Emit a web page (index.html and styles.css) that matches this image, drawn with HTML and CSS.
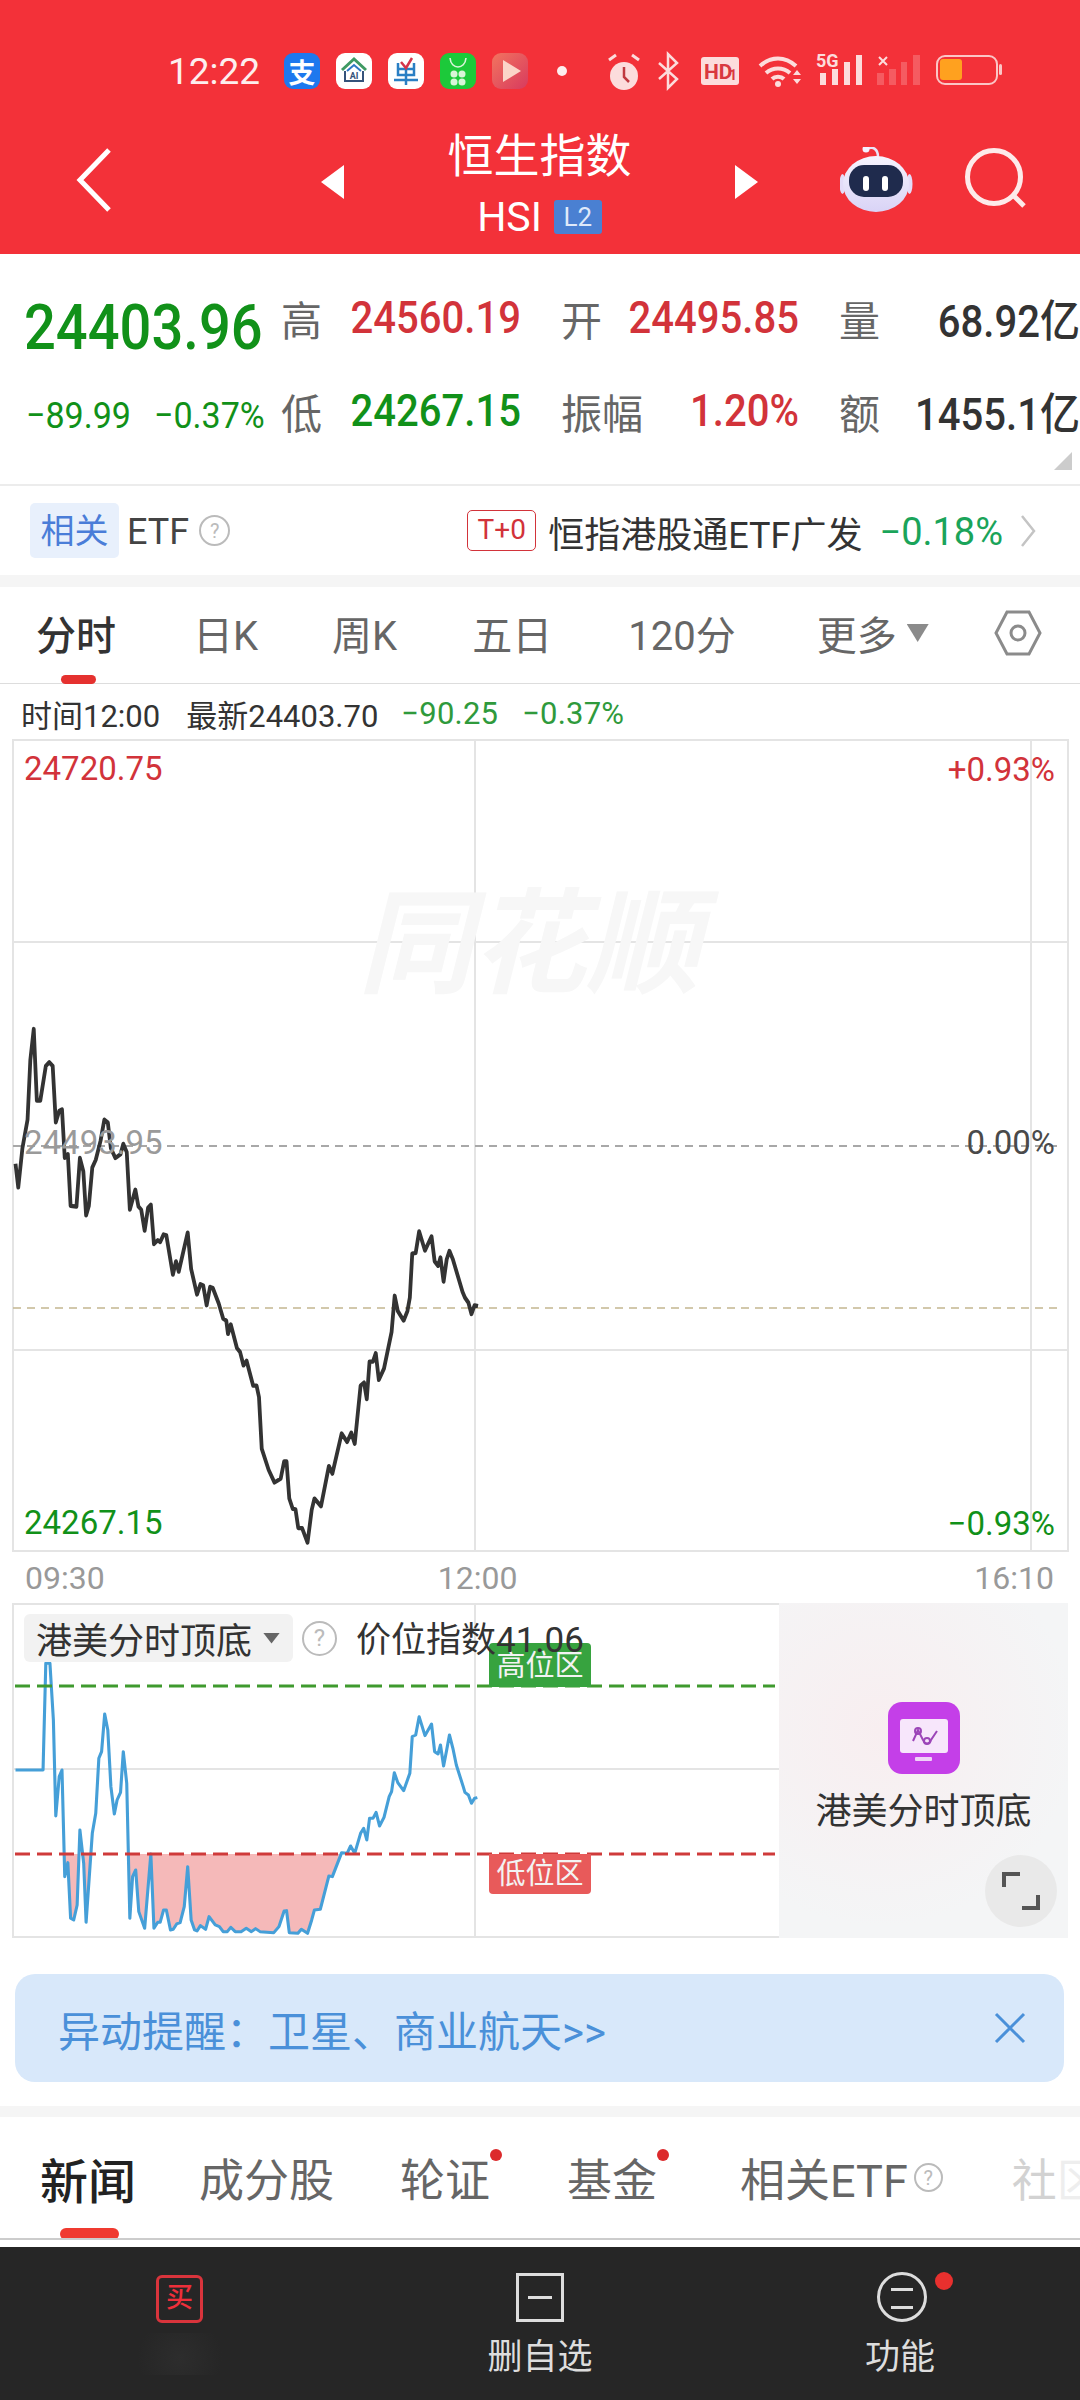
FILE: index.html
```html
<!DOCTYPE html>
<html lang="zh-CN">
<head>
<meta charset="UTF-8">
<meta name="viewport" content="width=device-width, initial-scale=1.0">
<title>恒生指数</title>
<link rel="stylesheet" href="styles.css">
</head>
<body>
<svg width="0" height="0" class="defs">
  <defs>
    <polyline id="price-line" points="45,480 53,542 65,440 80,365 88,210 98,128 107,315 117,315 133,225 143,215 153,225 162,372 172,342 180,338 188,465 197,455 205,590 222,592 232,465 242,500 250,615 258,590 268,490 278,470 292,420 303,365 313,372 322,440 335,465 350,455 358,428 368,450 377,600 393,548 402,592 410,600 420,655 430,595 438,587 447,690 458,680 465,685 475,665 483,667 502,770 511,735 519,762 545,660 555,755 572,822 582,795 590,798 600,850 610,802 618,805 635,845 648,885 657,890 662,925 670,900 688,962 697,972 707,1007 716,995 735,1060 745,1060 752,1090 760,1225 780,1280 797,1313 815,1303 825,1258 832,1258 840,1355 850,1382 858,1383 866,1432 877,1432 893,1470 905,1385 913,1355 932,1375 955,1270 965,1290 992,1185 1008,1207 1020,1183 1030,1212 1047,1060 1057,1052 1065,1095 1073,997 1083,997 1091,975 1100,1045 1115,1015 1137,920 1146,825 1155,865 1172,890 1183,865 1190,830 1197,715 1207,713 1217,657 1234,707 1253,670 1262,735 1272,747 1279,725 1288,788 1297,730 1305,708 1315,730 1343,815 1350,830 1360,843 1369,873 1378,850 1388,852"/>
    <clipPath id="below-low"><rect x="0" y="822" width="1600" height="260"/></clipPath>
    <linearGradient id="robot-head" x1="0" y1="0" x2="0" y2="1">
      <stop offset="0" stop-color="#f6f4fe"/>
      <stop offset="1" stop-color="#d9d3f6"/>
    </linearGradient>
  </defs>
</svg>

<header class="top">
  <div class="status">
    <span class="clock">12:22</span>
    <span class="app app-pay">支</span>
    <svg class="app app-white" viewBox="0 0 36 36">
      <path d="M6 17 18 6l12 11" fill="none" stroke="#3f9a63" stroke-width="3"/>
      <path d="M11 18 18 12l7 6" fill="none" stroke="#2f78c4" stroke-width="2"/>
      <path d="M9 18v10h18V18" fill="none" stroke="#35527a" stroke-width="2"/>
      <text x="18" y="26" class="app-ai">AI</text>
    </svg>
    <svg class="app app-white" viewBox="0 0 36 36">
      <path d="M10 10v12h16V10M18 16v16M6 27h24M10 16h16" fill="none" stroke="#2a7fc4" stroke-width="2.5"/>
      <path d="M13 9l5 6 6-10" fill="none" stroke="#d5344a" stroke-width="2.5"/>
    </svg>
    <svg class="app app-green" viewBox="0 0 36 36">
      <path d="M10 5c1 12 15 12 16 0" fill="none" stroke="#d8f5d8" stroke-width="1.6"/>
      <circle cx="14" cy="21" r="3.5" fill="#d8f5d8"/>
      <circle cx="22" cy="21" r="3.5" fill="#d8f5d8"/>
      <circle cx="14" cy="29" r="3.5" fill="#d8f5d8"/>
      <circle cx="22" cy="29" r="3.5" fill="#d8f5d8"/>
    </svg>
    <svg class="app app-play" viewBox="0 0 36 36">
      <path d="M11 7 29 18 11 29z" fill="#fbd5c8"/>
    </svg>
    <span class="status-dot"></span>
    <svg class="sys" viewBox="600 45 410 55">
      <circle cx="625" cy="77" r="14" fill="#fcdcdc"/>
      <path d="M625 68v10l5 5" fill="none" stroke="#c03a40" stroke-width="2.5"/>
      <path d="M610 61l7-5M640 61l-7-5" stroke="#fcdcdc" stroke-width="3"/>
      <path d="M660 64 678 80 669 89V55L678 64 660 80" fill="none" stroke="#fcdcdc" stroke-width="2.5"/>
      <rect x="702" y="58" width="38" height="28" rx="3" fill="#fcdcdc"/>
      <text x="705" y="80" class="sys-hd">HD</text>
      <text x="730" y="81" class="sys-one">1</text>
      <path d="M761 67c11-10 25-10 36 0M767 74c7-6 17-6 24 0M773 80c3-3 9-3 12 0" fill="none" stroke="#fcdcdc" stroke-width="4"/>
      <circle cx="779" cy="85" r="3" fill="#fcdcdc"/>
      <path d="M794 76l4-5 4 5zM794 80l4 5 4-5z" fill="#fcdcdc"/>
      <text x="817" y="68" class="sys-5g">5G</text>
      <path d="M821 74h6v12h-6zM833 70h6v16h-6zM845 63h6v23h-6zM857 56h6v30h-6z" fill="#fcdcdc"/>
      <path d="M880 58l8 8M888 58l-8 8" stroke="#fcdcdc" stroke-width="2"/>
      <path d="M878 74h7v12h-7zM890 70h7v16h-7zM902 63h6v23h-6zM914 56h7v30h-7z" fill="#fcdcdc" opacity=".25"/>
      <rect x="938" y="57" width="60" height="28" rx="8" fill="none" stroke="#fbc6c6" stroke-width="2"/>
      <rect x="941" y="60" width="22" height="21" rx="3" fill="#ffa11f"/>
      <rect x="1000" y="65" width="3" height="11" rx="1.5" fill="#fbc6c6"/>
    </svg>
  </div>
  <nav class="nav">
    <svg class="back" viewBox="0 0 36 64"><path d="M33 2 4 32l29 30" fill="none" stroke="#fff" stroke-width="5"/></svg>
    <span class="tri tri-left"></span>
    <div class="nav-title">
      <div class="name">恒生指数</div>
      <div class="code"><span>HSI</span><span class="l2">L2</span></div>
    </div>
    <span class="tri tri-right"></span>
    <svg class="robot" viewBox="840 148 74 66">
      <path d="M867 150c6-3 11 0 11 8" fill="none" stroke="#e8e4f8" stroke-width="2.5"/>
      <circle cx="866" cy="150" r="3.5" fill="#f5f0ff"/>
      <ellipse cx="842.5" cy="185" rx="3" ry="10" fill="#e3dcf8"/>
      <ellipse cx="909.5" cy="185" rx="3" ry="10" fill="#e3dcf8"/>
      <ellipse cx="876" cy="185" rx="33" ry="28" fill="url(#robot-head)"/>
      <rect x="849" y="166" width="54" height="32" rx="15" fill="#1f2b4d"/>
      <rect x="863" y="177" width="6" height="15" rx="3" fill="#fff"/>
      <rect x="882" y="177" width="6" height="15" rx="3" fill="#fff"/>
    </svg>
    <svg class="search" viewBox="964 150 62 62">
      <circle cx="994" cy="180" r="26.5" fill="none" stroke="#fdeaea" stroke-width="5"/>
      <path d="M1014 199l10 10" stroke="#fdeaea" stroke-width="5"/>
    </svg>
  </nav>
</header>

<section class="quote">
  <div class="price">24403.96</div>
  <div class="lbl">高</div>
  <div class="val up">24560.19</div>
  <div></div>
  <div class="lbl">开</div>
  <div class="val up">24495.85</div>
  <div></div>
  <div class="lbl">量</div>
  <div class="val dark">68.92亿</div>

  <div class="change"><span>−89.99</span><span>−0.37%</span></div>
  <div class="lbl">低</div>
  <div class="val down">24267.15</div>
  <div></div>
  <div class="lbl">振幅</div>
  <div class="val up">1.20%</div>
  <div></div>
  <div class="lbl">额</div>
  <div class="val dark">1455.1亿</div>
  <span class="corner"></span>
</section>

<section class="etf">
  <span class="etf-tag">相关</span>
  <span class="etf-name">ETF</span>
  <span class="help">?</span>
  <span class="t0">T+0</span>
  <span class="etf-fund">恒指港股通ETF广发</span>
  <span class="etf-pct">−0.18%</span>
  <svg class="etf-more" viewBox="0 0 16 32"><path d="M2 1l12 15L2 31" fill="none" stroke="#c4c4c4" stroke-width="2.5"/></svg>
</section>

<div class="band"></div>

<section class="tabs">
  <span class="tab active">分时</span>
  <span class="tab">日K</span>
  <span class="tab">周K</span>
  <span class="tab">五日</span>
  <span class="tab">120分</span>
  <span class="tab">更多</span>
  <span class="tab-caret"></span>
  <svg class="hex" viewBox="0 0 48 46">
    <path d="M13 2h22l11 21-11 21H13L2 23z" fill="none" stroke="#8b8b8b" stroke-width="3"/>
    <circle cx="24" cy="23" r="7" fill="none" stroke="#8b8b8b" stroke-width="3"/>
  </svg>
</section>

<div class="info">
  <span class="info-dark">时间12:00</span>
  <span class="info-dark info-new">最新24403.70</span>
  <span class="info-green">−90.25</span>
  <span class="info-green">−0.37%</span>
</div>

<section class="chart">
  <svg class="chart-svg" viewBox="0 739 1080 813">
    <path d="M13 740H1068M13 942H1068M13 1350H1068M13 1551H1068M13 739V1552M1068 739V1552M475 739V1552M1031 739V1552" fill="none" stroke="#e4e4e4" stroke-width="2"/>
    <path d="M13 1146H1063" stroke="#a8a8a8" stroke-width="2" stroke-dasharray="8 6"/>
    <path d="M13 1308H1063" stroke="#c4b690" stroke-width="1.5" stroke-dasharray="8 6"/>
    <g transform="translate(0 980) scale(.3444 .3827)">
      <use href="#price-line" class="price-path"/>
    </g>
  </svg>
  <div class="mark">同花顺</div>
  <span class="tag tag-l1 up">24720.75</span>
  <span class="tag tag-l2 grey">24493.95</span>
  <span class="tag tag-l3 down">24267.15</span>
  <span class="tag tag-r1 up">+0.93%</span>
  <span class="tag tag-r2 mid">0.00%</span>
  <span class="tag tag-r3 down">−0.93%</span>
</section>

<div class="axis"><span>09:30</span><span class="axis-mid">12:00</span><span class="axis-end">16:10</span></div>

<section class="sub">
  <div class="plot">
    <svg class="plot-svg" viewBox="0 1603 779 335">
      <path d="M13 1604H779M13 1769H779M13 1937H779M13 1603V1938M475 1603V1938" fill="none" stroke="#e4e4e4" stroke-width="2"/>
      <g transform="translate(0 1580) scale(.3444 .3333)">
        <g clip-path="url(#below-low)">
          <polygon class="low-fill" points="45,570 125,570 133,250 145,250 155,420 162,708 172,590 180,570 188,890 197,848 205,1015 214,1020 224,975 232,750 243,850 250,1027 268,760 278,700 287,535 295,515 304,402 313,450 322,620 332,702 340,660 350,637 358,515 368,610 377,1015 385,890 394,870 403,995 420,1045 438,822 447,1045 458,1027 465,1027 475,990 483,990 495,1050 503,1048 513,1032 523,1028 535,980 545,860 555,1020 565,1050 572,1053 582,1037 597,1048 607,1010 625,1035 637,1040 648,1055 660,1055 670,1042 683,1055 700,1055 715,1045 730,1055 742,1046 755,1055 795,1058 810,1040 825,993 832,992 840,1058 865,1060 875,1048 893,1060 905,1020 913,990 930,988 955,888 965,890 992,818 1008,820 1386,653 1386,822 45,822"/>
        </g>
        <polyline class="index-path" points="45,570 125,570 133,250 145,250 155,420 162,708 172,590 180,570 188,890 197,848 205,1015 214,1020 224,975 232,750 243,850 250,1027 268,760 278,700 287,535 295,515 304,402 313,450 322,620 332,702 340,660 350,637 358,515 368,610 377,1015 385,890 394,870 403,995 420,1045 438,822 447,1045 458,1027 465,1027 475,990 483,990 495,1050 503,1048 513,1032 523,1028 535,980 545,860 555,1020 565,1050 572,1053 582,1037 597,1048 607,1010 625,1035 637,1040 648,1055 660,1055 670,1042 683,1055 700,1055 715,1045 730,1055 742,1046 755,1055 795,1058 810,1040 825,993 832,992 840,1058 865,1060 875,1048 893,1060 905,1020 913,990 930,988 955,888 965,890 992,818 1008,820 1018,798 1030,820 1047,760 1056,745 1065,780 1073,715 1083,715 1092,697 1102,738 1115,712 1130,650 1137,635 1145,578 1155,608 1172,632 1190,580 1197,470 1207,465 1217,410 1234,467 1253,432 1262,515 1272,522 1279,495 1288,558 1297,510 1305,465 1315,505 1325,555 1345,620 1350,637 1360,645 1369,670 1378,655 1386,653"/>
      </g>
      <path d="M15 1686H775" stroke="#3f9a2e" stroke-width="3" stroke-dasharray="15 7"/>
      <path d="M15 1854H775" stroke="#cf3a3a" stroke-width="3" stroke-dasharray="15 7"/>
    </svg>
    <span class="zone zone-high">高位区</span>
    <span class="zone zone-low">低位区</span>
    <div class="plot-head">
      <span class="pill">港美分时顶底<i class="pill-caret"></i></span>
      <span class="help help-big">?</span>
      <span class="plot-val">价位指数41.06</span>
    </div>
  </div>
  <div class="side">
    <svg class="side-icon" viewBox="0 0 72 72">
      <rect width="72" height="72" rx="14" fill="#c43fe8"/>
      <rect x="12" y="17" width="48" height="34" rx="3" fill="#f7e6fb"/>
      <rect x="27" y="55" width="17" height="4" rx="1" fill="#f0d2f8"/>
      <path d="M25 39l5-11 5 10c2 5 7 4 8 0l6-9" fill="none" stroke="#9c45b8" stroke-width="2"/>
      <circle cx="30" cy="29" r="3" fill="none" stroke="#9c45b8" stroke-width="2"/>
      <circle cx="39" cy="39" r="3" fill="none" stroke="#9c45b8" stroke-width="2"/>
    </svg>
    <div class="side-name">港美分时顶底</div>
    <span class="expand">
      <svg viewBox="0 0 38 38"><path d="M2 15V2h16M36 23v13H20" fill="none" stroke="#555" stroke-width="4"/></svg>
    </span>
  </div>
</section>

<div class="notice-wrap">
  <div class="notice">
    <span>异动提醒：卫星、商业航天&gt;&gt;</span>
    <svg class="notice-x" viewBox="0 0 32 32"><path d="M2 2l28 28M30 2 2 30" stroke="#4a90d9" stroke-width="3"/></svg>
  </div>
</div>

<div class="band band-low"></div>

<section class="news">
  <span class="news-tab active">新闻</span>
  <span class="news-tab">成分股</span>
  <span class="news-tab has-dot">轮证</span>
  <span class="news-tab has-dot">基金</span>
  <span class="news-tab">相关ETF<span class="help help-small">?</span></span>
  <span class="news-tab faded">社<span class="fainter">区</span></span>
</section>

<footer class="bottom">
  <div class="bottom-item">
    <span class="buy">买</span>
    <span class="smudge"></span>
  </div>
  <div class="bottom-item">
    <span class="del"></span>
    <span class="bottom-text">删自选</span>
  </div>
  <div class="bottom-item">
    <span class="more"></span>
    <span class="bottom-text">功能</span>
  </div>
</footer>
</body>
</html>
```

FILE: styles.css
```css
* {
  box-sizing: border-box;
}

body {
  margin: 0;
  width: 1080px;
  height: 2400px;
  overflow: hidden;
  background-color: #fff;
  font-family: Roboto, "Noto Sans CJK SC", sans-serif;
  color: #333;
}

.defs {
  position: absolute;
}

.up { color: #d2333a; }
.down { color: #119119; }
.dark { color: #333; }
.grey { color: #9a9a9a; }
.mid { color: #4a4a4a; }

/* red header */
.top {
  height: 254px;
  background-color: #f33139;
  padding-top: 53px;
}

.status {
  display: flex;
  align-items: center;
  height: 36px;
  padding-left: 168px;
}

.clock {
  width: 92px;
  margin-right: 24px;
  font-size: 37px;
  color: #fdeeee;
}

.app {
  width: 36px;
  height: 36px;
  margin-right: 16px;
  border-radius: 9px;
}

.app-pay {
  display: flex;
  justify-content: center;
  align-items: center;
  background-color: #1e78ee;
  color: #fff;
  font-size: 27px;
  font-weight: 700;
}

.app-white { background-color: #fff; }
.app-green { background-color: #1cc93a; }
.app-play { background: linear-gradient(135deg, #f2745f, #d83a5e); }

.app-ai {
  font-size: 9px;
  font-weight: 700;
  fill: #35527a;
  text-anchor: middle;
}

.status-dot {
  width: 10px;
  height: 10px;
  margin-left: 13px;
  border-radius: 50%;
  background-color: #fdeeee;
}

.sys {
  width: 410px;
  height: 55px;
  margin-left: 32px;
  flex-shrink: 0;
}

.sys-hd {
  font-size: 21px;
  font-weight: 700;
  fill: #d9383f;
}

.sys-one {
  font-size: 14px;
  font-weight: 700;
  fill: #d9383f;
}

.sys-5g {
  font-size: 18px;
  font-weight: 700;
  fill: #fcdcdc;
}

.nav {
  display: flex;
  align-items: flex-start;
  margin-top: 38px;
}

.back {
  width: 36px;
  height: 64px;
  margin: 21px 0 0 76px;
}

.tri {
  width: 0;
  height: 0;
  margin-top: 38px;
  border-top: 17px solid transparent;
  border-bottom: 17px solid transparent;
}

.tri-left {
  margin-left: 209px;
  border-right: 23px solid #fff;
}

.tri-right {
  border-left: 23px solid #fff;
}

.nav-title {
  width: 391px;
  text-align: center;
  color: #fff;
}

.name {
  height: 60px;
  font-size: 46px;
  line-height: 58px;
}

.code {
  display: flex;
  justify-content: center;
  align-items: center;
  gap: 12px;
  margin-top: 12px;
  font-size: 41px;
  line-height: 36px;
}

.l2 {
  width: 48px;
  height: 34px;
  background-color: #4a80d2;
  border-radius: 3px;
  font-size: 26px;
  line-height: 34px;
  color: #dfe9fa;
}

.robot {
  width: 74px;
  height: 66px;
  margin: 20px 0 0 82px;
}

.search {
  width: 62px;
  height: 62px;
  margin: 20px 0 0 50px;
}

/* quote block */
.quote {
  position: relative;
  display: grid;
  grid-template-columns: 255px 72px 168px 40px 71px 167px 40px 76px 165px;
  grid-template-rows: 93px 93px;
  height: 232px;
  width: 1080px;
  padding: 17px 0 0 26px;
  align-items: center;
  border-bottom: 2px solid #ececec;
}

.price {
  margin-left: -2px;
  padding-top: 20px;
  font-size: 63px;
  font-weight: 500;
  white-space: nowrap;
  transform: scaleX(.89);
  transform-origin: left;
  color: #119119;
}

.lbl {
  font-size: 41px;
  color: #666;
  white-space: nowrap;
}

.val {
  display: flex;
  justify-content: flex-end;
  font-size: 44px;
  font-weight: 500;
  white-space: nowrap;
  transform: scaleX(.91);
  transform-origin: right;
}

.change {
  display: flex;
  padding-top: 10px;
  font-size: 37px;
  color: #119119;
  white-space: nowrap;
}

.change span {
  width: 129px;
  transform: scaleX(.92);
  transform-origin: left;
}

.corner {
  position: absolute;
  right: 8px;
  bottom: 14px;
  width: 18px;
  height: 18px;
  background-color: #ccc;
  clip-path: polygon(100% 0, 100% 100%, 0 100%);
}

/* etf strip */
.etf {
  display: flex;
  align-items: center;
  height: 89px;
  padding-left: 30px;
  font-size: 36px;
}

.etf-tag {
  width: 89px;
  height: 55px;
  background-color: #e8f0fc;
  border-radius: 5px;
  font-size: 34px;
  line-height: 57px;
  text-align: center;
  color: #4a7dd8;
}

.etf-name {
  margin: 3px 0 0 8px;
  color: #444;
}

.help {
  display: inline-flex;
  justify-content: center;
  align-items: center;
  width: 31px;
  height: 31px;
  margin-left: 10px;
  border: 2px solid #bbb;
  border-radius: 50%;
  font-size: 20px;
  color: #bbb;
}

.t0 {
  width: 69px;
  height: 41px;
  margin-left: 237px;
  border: 1.5px solid #d2333a;
  border-radius: 5px;
  font-size: 28px;
  line-height: 38px;
  text-align: center;
  color: #d2333a;
}

.etf-fund {
  margin: 3px 0 0 12px;
  color: #333;
  white-space: nowrap;
}

.etf-pct {
  margin: 3px 0 0 17px;
  font-size: 38px;
  color: #1aa45a;
  white-space: nowrap;
}

.etf-more {
  width: 16px;
  height: 32px;
  margin-left: 17px;
}

.band {
  height: 12px;
  background-color: #f5f5f5;
}

.band-low {
  height: 11px;
}

/* period tabs */
.tabs {
  display: flex;
  align-items: center;
  height: 97px;
  padding: 0 0 4px 36px;
  border-bottom: 1px solid #ddd;
  font-size: 40px;
  color: #666;
}

.tab {
  position: relative;
  white-space: nowrap;
}

.tab.active {
  color: #333;
  font-weight: 500;
}

.tab.active::after {
  content: "";
  position: absolute;
  left: 25px;
  bottom: -22px;
  width: 35px;
  height: 9px;
  background-color: #e5312f;
  border-radius: 5px;
}

.tab:nth-child(2) { margin-left: 77px; }
.tab:nth-child(3) { margin-left: 74px; }
.tab:nth-child(4) { margin-left: 75px; }
.tab:nth-child(5) { margin-left: 76px; }
.tab:nth-child(6) { margin-left: 81px; }

.tab-caret {
  width: 22px;
  height: 18px;
  margin-left: 10px;
  background-color: #8b8b8b;
  clip-path: polygon(0 0, 100% 0, 50% 100%);
}

.hex {
  width: 48px;
  height: 46px;
  margin-left: 65px;
}

.info {
  display: flex;
  align-items: center;
  height: 55px;
  padding: 4px 0 0 21px;
  font-size: 31px;
  white-space: nowrap;
}

.info-new {
  margin: 0 23px 0 26px;
}

.info-green {
  margin-right: 24px;
  font-size: 31px;
  letter-spacing: .2px;
  color: #2f9a3c;
}

/* price chart */
.chart {
  position: relative;
  height: 813px;
}

.chart-svg {
  display: block;
  width: 1080px;
  height: 813px;
}

.price-path {
  fill: none;
  stroke: #333;
  stroke-width: 11;
  stroke-linejoin: round;
}

.mark {
  position: absolute;
  left: 358px;
  top: 141px;
  font-size: 114px;
  font-weight: 700;
  font-style: italic;
  line-height: 130px;
  color: #f7f7f7;
}

.tag {
  position: absolute;
  font-size: 33px;
  line-height: 38px;
  white-space: nowrap;
}

.tag-l1 { left: 24px; top: 11px; }
.tag-l2 { left: 24px; top: 385px; }
.tag-l3 { left: 24px; top: 765px; }
.tag-r1 { right: 25px; top: 12px; }
.tag-r2 { right: 25px; top: 385px; }
.tag-r3 { right: 25px; top: 766px; }

.axis {
  display: flex;
  height: 51px;
  padding: 7px 26px 0 25px;
  font-size: 32px;
  line-height: 38px;
  color: #999;
}

.axis-mid {
  margin-left: 333px;
}

.axis-end {
  margin-left: auto;
}

/* indicator panel */
.sub {
  display: flex;
  height: 335px;
}

.plot {
  position: relative;
  width: 779px;
}

.plot-svg {
  display: block;
  width: 779px;
  height: 335px;
}

.low-fill {
  fill: #f5b9b9;
}

.index-path {
  fill: none;
  stroke: #459fd8;
  stroke-width: 9;
  stroke-linejoin: round;
}

.plot-head {
  position: absolute;
  left: 24px;
  top: 11px;
  display: flex;
  align-items: center;
}

.pill {
  display: flex;
  align-items: center;
  width: 269px;
  height: 48px;
  padding-left: 12px;
  background-color: #f2f2f2;
  border-radius: 6px;
  font-size: 36px;
  white-space: nowrap;
}

.pill-caret {
  width: 17px;
  height: 11px;
  margin-left: 11px;
  background-color: #666;
  clip-path: polygon(0 0, 100% 0, 50% 100%);
}

.help-big {
  width: 35px;
  height: 35px;
  margin-left: 9px;
  font-size: 24px;
}

.plot-val {
  margin: -4px 0 0 19px;
  font-size: 35px;
  white-space: nowrap;
}

.zone {
  position: absolute;
  left: 489px;
  width: 102px;
  font-size: 29px;
  text-align: center;
  color: #f3f3f3;
}

.zone-high {
  top: 40px;
  height: 44px;
  line-height: 46px;
  background-color: #37a33f;
  border-radius: 4px 4px 0 0;
}

.zone-low {
  top: 251px;
  height: 40px;
  line-height: 40px;
  background-color: #e85a5a;
  border-radius: 0 0 4px 4px;
}

.side {
  position: relative;
  display: flex;
  flex-direction: column;
  align-items: center;
  width: 289px;
  padding-top: 99px;
  background: radial-gradient(circle at 35% 38%, #f8eef0, #f4f5f6 70%);
}

.side-icon {
  width: 72px;
  height: 72px;
}

.side-name {
  margin-top: 8px;
  font-size: 36px;
  white-space: nowrap;
}

.expand {
  position: absolute;
  right: 11px;
  bottom: 11px;
  display: flex;
  justify-content: center;
  align-items: center;
  width: 72px;
  height: 72px;
  background-color: #e9e9e9;
  border-radius: 50%;
}

.expand svg {
  width: 38px;
  height: 38px;
}

/* alert banner */
.notice-wrap {
  height: 168px;
  padding: 36px 16px 0 15px;
}

.notice {
  display: flex;
  justify-content: space-between;
  align-items: center;
  height: 108px;
  padding: 0 38px 0 43px;
  background-color: #d8e8fa;
  border-radius: 20px;
  font-size: 42px;
  color: #4a90d9;
  white-space: nowrap;
}

.notice-x {
  width: 32px;
  height: 32px;
}

/* news tabs */
.news {
  display: flex;
  align-items: center;
  height: 123px;
  padding: 0 0 0 40px;
  border-bottom: 2px solid #ccc;
  font-size: 45px;
  color: #666;
  overflow: hidden;
  white-space: nowrap;
}

.news-tab {
  position: relative;
  display: inline-flex;
  align-items: center;
  flex-shrink: 0;
}

.news-tab.active {
  font-size: 48px;
  font-weight: 500;
  color: #222;
}

.news-tab.active::after {
  content: "";
  position: absolute;
  left: 20px;
  bottom: -27px;
  width: 59px;
  height: 12px;
  background-color: #f03a30;
  border-radius: 6px;
}

.has-dot::after {
  content: "";
  position: absolute;
  right: -12px;
  top: 4px;
  width: 12px;
  height: 12px;
  background-color: #dc2a2c;
  border-radius: 50%;
}

.news-tab:nth-child(2) { margin-left: 63px; }
.news-tab:nth-child(3) { margin-left: 66px; }
.news-tab:nth-child(4) { margin-left: 77px; }
.news-tab:nth-child(5) { margin-left: 83px; }
.news-tab:nth-child(6) { margin-left: 69px; }

.faded {
  color: #d2d2d2;
}

.fainter {
  color: #eee;
}

.help-small {
  width: 29px;
  height: 29px;
  margin-left: 6px;
  font-size: 20px;
}

/* bottom bar */
.bottom {
  display: grid;
  grid-template-columns: repeat(3, 360px);
  height: 153px;
  margin-top: 7px;
  padding-top: 26px;
  background-color: #262626;
}

.bottom-item {
  display: flex;
  flex-direction: column;
  align-items: center;
  font-size: 35px;
  color: #ddd;
}

.bottom-text {
  margin-top: 16px;
  line-height: 40px;
}

.buy {
  width: 47px;
  height: 48px;
  margin: 2px 0 0 -1px;
  border: 3px solid #d9343c;
  border-radius: 6px;
  font-size: 27px;
  font-weight: 500;
  line-height: 40px;
  text-align: center;
  color: #ee2f3a;
}

.smudge {
  width: 110px;
  height: 42px;
  margin-top: 10px;
  background: radial-gradient(circle at 50% 60%, #2d2d2d, #262626 70%);
}

.del {
  position: relative;
  width: 48px;
  height: 49px;
  border: 3px solid #ddd;
}

.del::after {
  content: "";
  position: absolute;
  left: 9px;
  top: 20px;
  width: 24px;
  height: 3px;
  background-color: #ddd;
}

.more {
  position: relative;
  width: 50px;
  height: 50px;
  margin: -1px -4px 0 0;
  border: 3px solid #ddd;
  border-radius: 50%;
}

.more::before {
  content: "";
  position: absolute;
  left: 11px;
  top: 13px;
  width: 22px;
  height: 15px;
  border-top: 3px solid #ddd;
  border-bottom: 3px solid #ddd;
}

.more::after {
  content: "";
  position: absolute;
  left: 55px;
  top: -3px;
  width: 18px;
  height: 18px;
  background-color: #e8302e;
  border-radius: 50%;
}
```
